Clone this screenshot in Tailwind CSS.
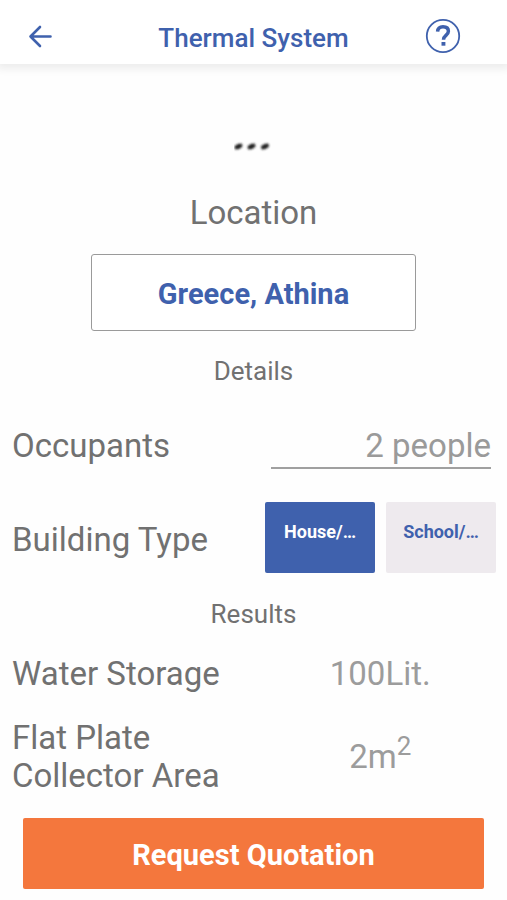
<!DOCTYPE html>
<html lang="en">
<head>
<meta charset="utf-8">
<meta name="viewport" content="width=device-width, initial-scale=1">
<title>Thermal System</title>
<script src="https://cdn.jsdelivr.net/npm/@tailwindcss/browser@4"></script>
</head>
<body class="min-h-screen bg-[#fefefe] font-['Roboto',sans-serif] text-[#717171]">
<header class="grid h-16 grid-cols-[1fr_auto_1fr] items-center bg-white px-6 pt-2 shadow-[0_2px_8px_3px_rgba(0,0,0,0.07)]">
  <button type="button" aria-label="Back" class="justify-self-start text-[#3f61ad]">
    <svg class="h-8 w-8" viewBox="0 0 32 32" fill="none" stroke="currentColor" stroke-width="2.6" stroke-linecap="round" stroke-linejoin="round"><path d="M26.500 16.500H6.500M16 7L6.500 16.500 16 26"/></svg>
  </button>
  <h1 class="pt-1 text-[26px] leading-8 font-medium text-[#3f61ad]">Thermal System</h1>
  <button type="button" aria-label="Help" class="mr-[22px] justify-self-end text-[#3f61ad]">
    <svg class="h-9 w-9" viewBox="0 0 36 36" fill="none" stroke="currentColor"><circle cx="18" cy="18" r="16.2" stroke-width="1.8"/><path d="M12.600 13.600c.2-3.200 2.400-4.900 5.400-4.900 3.300 0 5.400 1.700 5.400 4.600 0 4.200-4.900 4.100-4.900 8.400" stroke-width="3.500"/><path d="M16.500 24h3.900v3.700h-3.900z" fill="currentColor" stroke="none"/></svg>
  </button>
</header>
<main class="flex flex-col">
  <div class="mt-[76px] flex h-3 justify-center">
    <svg class="h-3 w-10" viewBox="3 0 40 12" role="img" aria-label="Loading"><defs><filter id="soft" x="-50%" y="-50%" width="200%" height="200%"><feGaussianBlur stdDeviation="1"/></filter></defs><g fill="#222" filter="url(#soft)"><ellipse cx="7.500" cy="6.500" rx="4.200" ry="2.400" transform="rotate(-24 7.500 6.500)"/><ellipse cx="20.500" cy="6.500" rx="4.200" ry="2.400" transform="rotate(-24 20.500 6.500)"/><ellipse cx="34" cy="6.500" rx="4.200" ry="2.400" transform="rotate(-24 34 6.500)"/></g></svg>
  </div>
  <h2 class="mt-[42px] text-center text-[33px] leading-[38px]">Location</h2>
  <button type="button" class="mx-[91px] mt-[22px] h-[77px] rounded-[3px] border border-[#9a9a9a] bg-white pt-1 text-[29px] font-bold text-[#3f61ad]">Greece, Athina</button>
  <h2 class="mt-6 text-center text-[26px] leading-8">Details</h2>
  <div class="mt-8 flex items-center justify-between pr-4 pl-3">
    <label for="occupants" class="pt-1 text-[33px] leading-[38px]">Occupants</label>
    <input id="occupants" type="text" value="2 people" class="h-[50px] w-[220px] border-b-2 border-[#a0a0a0] bg-transparent pt-1 text-right text-[33px] text-[#9a9a9a] outline-none">
  </div>
  <div class="mt-[33px] flex items-center justify-between pr-[11px] pl-3">
    <span id="building" class="pt-1 text-[33px] leading-[38px]">Building Type</span>
    <div role="group" aria-labelledby="building" class="flex gap-[11px]">
      <button type="button" aria-pressed="true" class="h-[71px] w-[110px] rounded-[2px] bg-[#3f61ad] pb-3 text-[18px] font-bold text-white">House/…</button>
      <button type="button" aria-pressed="false" class="h-[71px] w-[110px] rounded-[2px] bg-[#eeeaee] pb-3 text-[18px] font-bold text-[#3f61ad]">School/…</button>
    </div>
  </div>
  <h2 class="mt-[25px] text-center text-[26px] leading-8">Results</h2>
  <dl class="mt-[25px] grid grid-cols-2 items-center gap-y-[26px] pr-1 pl-3 text-[33px] leading-[38px]">
    <dt>Water Storage</dt>
    <dd class="text-center text-[#9c9c9c]">100Lit.</dd>
    <dt>Flat Plate Collector Area</dt>
    <dd class="text-center text-[#9c9c9c]">2m<sup class="text-[26px]">2</sup></dd>
  </dl>
  <button type="button" class="mx-[23px] mt-[23px] h-[71px] rounded-[2px] bg-[#f4773d] pt-1 text-[29px] font-bold text-white">Request Quotation</button>
</main>
</body>
</html>
